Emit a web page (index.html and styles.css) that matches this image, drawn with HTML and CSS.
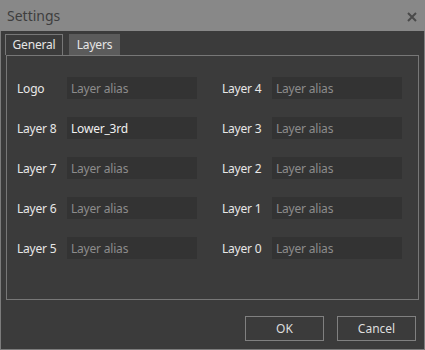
FILE: index.html
```html
<!DOCTYPE html>
<html lang="en">
  <head>
    <meta charset="UTF-8" />
    <title>Settings</title>
    <link rel="stylesheet" href="styles.css">
  </head>
  <body>
    <div class="window">
      <div class="titlebar">
        <span class="title">Settings</span>
        <svg class="close" width="10" height="10" viewBox="0 0 10 10">
          <path d="M1 1 L9 9 M9 1 L1 9" stroke="#4a4a4a" stroke-width="2" />
        </svg>
      </div>
      <div class="content">
        <div class="tabs">
          <div class="tab general">General</div>
          <div class="tab active">Layers</div>
        </div>
        <div class="pane">
          <div class="column">
            <div class="field"><label>Logo</label><input type="text" placeholder="Layer alias" /></div>
            <div class="field"><label>Layer 8</label><input type="text" placeholder="Layer alias" value="Lower_3rd" /></div>
            <div class="field"><label>Layer 7</label><input type="text" placeholder="Layer alias" /></div>
            <div class="field"><label>Layer 6</label><input type="text" placeholder="Layer alias" /></div>
            <div class="field"><label>Layer 5</label><input type="text" placeholder="Layer alias" /></div>
          </div>
          <div class="column">
            <div class="field"><label>Layer 4</label><input type="text" placeholder="Layer alias" /></div>
            <div class="field"><label>Layer 3</label><input type="text" placeholder="Layer alias" /></div>
            <div class="field"><label>Layer 2</label><input type="text" placeholder="Layer alias" /></div>
            <div class="field"><label>Layer 1</label><input type="text" placeholder="Layer alias" /></div>
            <div class="field"><label>Layer 0</label><input type="text" placeholder="Layer alias" /></div>
          </div>
        </div>
        <div class="actions">
          <button class="button">OK</button>
          <button class="button">Cancel</button>
        </div>
      </div>
    </div>
  </body>
</html>
```

FILE: styles.css
```css
body {
  margin: 0;
  font-family: "Noto Sans", "Open Sans", sans-serif;
  font-size: 12px;
  letter-spacing: -0.2px;
  background-color: #3b3b3b;
}

.window {
  width: 425px;
  height: 350px;
  box-sizing: border-box;
  border: 1px solid #7c7c7c;
  border-top: none;
  background-color: #3b3b3b;
  display: flex;
  flex-direction: column;
}

.titlebar {
  height: 31px;
  margin: 0 -1px;
  background-color: #888888;
  display: flex;
  align-items: center;
  justify-content: space-between;
  padding: 0 8px 0 7px;
}

.title {
  font-size: 14px;
  letter-spacing: 0;
  color: #3e3e3e;
}

.close {
  margin-top: 2px;
}

.content {
  flex: 1;
  padding: 3px 5px 0 4px;
  display: flex;
  flex-direction: column;
}

.tabs {
  display: flex;
  gap: 6px;
  height: 21px;
}

.tab {
  width: 51px;
  box-sizing: border-box;
  border: 1px solid #777777;
  border-bottom: none;
  color: #e6e6e6;
  text-align: center;
  line-height: 20px;
}

.tab.general {
  width: 58px;
}

.tab.active {
  background-color: #5b5b5b;
  border-color: #5b5b5b;
}

.pane {
  margin-left: 1px;
  width: 413px;
  height: 245px;
  box-sizing: border-box;
  border: 1px solid #777777;
  padding: 21px 0 0 10px;
  display: flex;
  gap: 25px;
}

.column {
  display: flex;
  flex-direction: column;
  gap: 18px;
}

.field {
  display: flex;
  align-items: center;
  height: 22px;
}

.field label {
  width: 50px;
  color: #e8e8e8;
}

.field input {
  width: 130px;
  height: 22px;
  box-sizing: border-box;
  border: none;
  outline: none;
  background-color: #333333;
  color: #f0f0f0;
  font-family: inherit;
  font-size: 12px;
  letter-spacing: -0.2px;
  padding: 0 4px;
}

.field input::placeholder {
  color: #8c8c8c;
}

.actions {
  display: flex;
  justify-content: flex-end;
  gap: 13px;
  padding: 16px 3px 0 0;
}

.button {
  width: 79px;
  height: 25px;
  box-sizing: border-box;
  background-color: #3b3b3b;
  border: 1px solid #808080;
  color: #dedede;
  font-family: inherit;
  font-size: 12px;
}
```
